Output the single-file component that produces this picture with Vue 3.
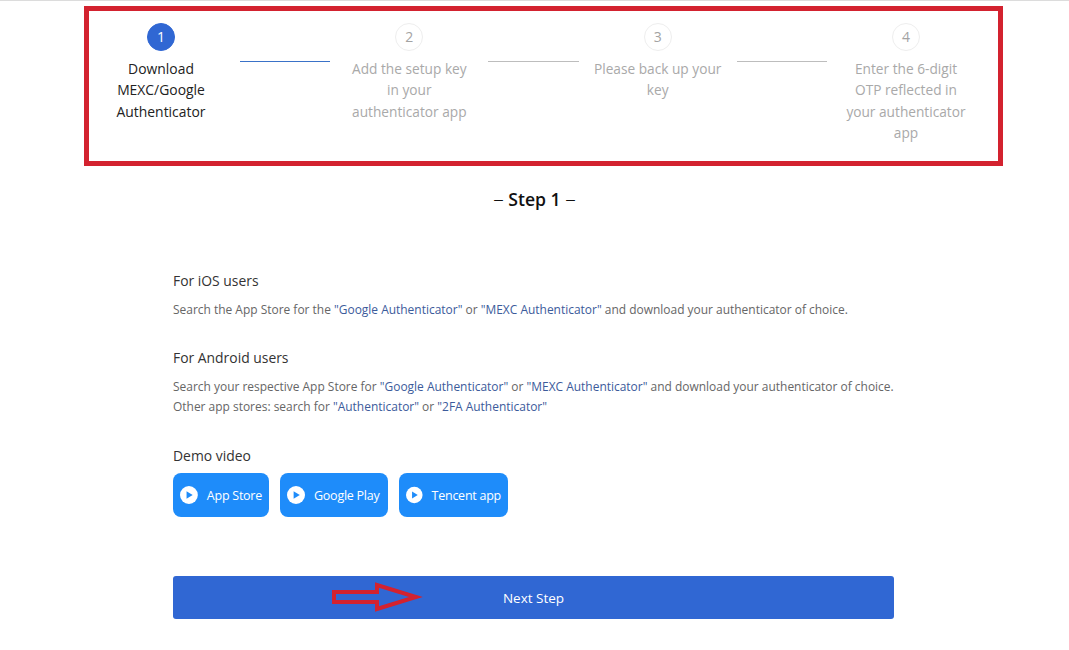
<script setup>
const steps = [
  { n: 1, text: 'Download MEXC/Google Authenticator', active: true },
  { n: 2, text: 'Add the setup key in your authenticator app' },
  { n: 3, text: 'Please back up your key' },
  { n: 4, text: 'Enter the 6-digit OTP reflected in your authenticator app' },
]
const videos = ['App Store', 'Google Play', 'Tencent app']
</script>

<template>
  <div class="page">
    <div class="steps">
      <template v-for="(s, i) in steps" :key="s.n">
        <div class="step" :class="{ active: s.active }">
          <div class="num">{{ s.n }}</div>
          <div class="label">{{ s.text }}</div>
        </div>
        <div v-if="i < steps.length - 1" class="line" :class="{ active: s.active }"></div>
      </template>
    </div>

    <h2 class="title"><span class="dash">–</span> Step 1 <span class="dash">–</span></h2>

    <div class="content">
      <h3>For iOS users</h3>
      <p>
        Search the App Store for the <a>"Google Authenticator"</a> or <a>"MEXC Authenticator"</a> and download your authenticator of choice.
      </p>

      <h3 class="android">For Android users</h3>
      <p class="two">
        Search your respective App Store for <a>"Google Authenticator"</a> or <a>"MEXC Authenticator"</a> and download your authenticator of choice.<br />
        Other app stores: search for <a>"Authenticator"</a> or <a>"2FA Authenticator"</a>
      </p>

      <h3 class="demo">Demo video</h3>
      <div class="videos">
        <button v-for="v in videos" :key="v" class="video">
          <svg width="18" height="18" viewBox="0 0 18 18">
            <circle cx="9" cy="9" r="9" fill="#fff" />
            <path d="M6.6 5.2 L12.8 9 L6.6 12.8 Z" fill="#1e8cfa" />
          </svg>
          {{ v }}
        </button>
      </div>

      <button class="next">
        Next Step
        <svg class="arrow" width="92" height="32" viewBox="0 0 92 32">
          <path d="M2 11 H45 V4 L84 16 L45 28 V21 H2 Z" fill="none" stroke="#d3222f" stroke-width="4" />
        </svg>
      </button>
    </div>

    <div class="highlight"></div>
  </div>
</template>

<style scoped>
.page {
  position: relative;
  width: 1069px;
  height: 650px;
  box-sizing: border-box;
  border-top: 1px solid #dcdcdc;
  background: #fff;
  font-family: "Open Sans", "Noto Sans", sans-serif;
  overflow: hidden;
}

.steps {
  display: flex;
  align-items: flex-start;
  margin: 22px 99px 0 97px;
  height: 136px;
}

.step {
  width: 128px;
  flex: none;
  text-align: center;
  font-size: 13.7px;
  line-height: 21.6px;
  color: #a9a9a9;
}

.step.active {
  color: #222;
  font-size: 13.9px;
  font-weight: 500;
}

.num {
  width: 26px;
  height: 26px;
  margin: 0 auto 6.7px;
  border: 1px solid #eee;
  border-radius: 50%;
  line-height: 26px;
  font-size: 14px;
  font-weight: 400;
  color: #a3a3a3;
}

.active .num {
  background: #3067d3;
  border-color: #3067d3;
  color: #fff;
}

.line {
  flex: 1;
  height: 1px;
  margin: 38px 15px 0 15px;
  background: #bdbdbd;
}

.line.active {
  background: #3a72c8;
}

.title {
  margin: 28px 0 0;
  text-align: center;
  font-size: 17.6px;
  line-height: 24px;
  font-weight: 600;
  color: #111;
}

.dash {
  font-size: 21px;
  line-height: 0;
  font-weight: 300;
}

.content {
  width: 721px;
  margin: 60px 0 0 173px;
}

h3 {
  margin: 0;
  font-size: 13.9px;
  line-height: 20px;
  font-weight: 500;
  color: #333;
}

p {
  margin: 9px 0 0;
  font-size: 11.96px;
  line-height: 20px;
  color: #666;
}

p.two {
  white-space: nowrap;
}

a {
  color: #3c5b9b;
}

.android {
  margin-top: 28px;
}

.demo {
  margin-top: 29px;
}

.videos {
  display: grid;
  grid-template-columns: 96px 108px 109px;
  gap: 11px;
  margin-top: 7px;
}

.video {
  display: flex;
  align-items: center;
  gap: 9px;
  height: 44px;
  padding: 0 7px;
  border: 0;
  border-radius: 8px;
  background: #1e8cfa;
  color: #fff;
  font-family: inherit;
  font-size: 12.5px;
  letter-spacing: -0.25px;
  white-space: nowrap;
}

.next {
  position: relative;
  display: block;
  width: 100%;
  height: 43px;
  margin-top: 59px;
  border: 0;
  border-radius: 3px;
  background: #3067d3;
  color: #fff;
  font-family: inherit;
  font-size: 13.5px;
}

.arrow {
  position: absolute;
  left: 159px;
  top: 5px;
}

.highlight {
  position: absolute;
  left: 84px;
  top: 5px;
  width: 919px;
  height: 160px;
  box-sizing: border-box;
  border: 5px solid #d3222f;
  pointer-events: none;
}
</style>

<style>
html, body {
  margin: 0;
  background: #fff;
}
</style>
